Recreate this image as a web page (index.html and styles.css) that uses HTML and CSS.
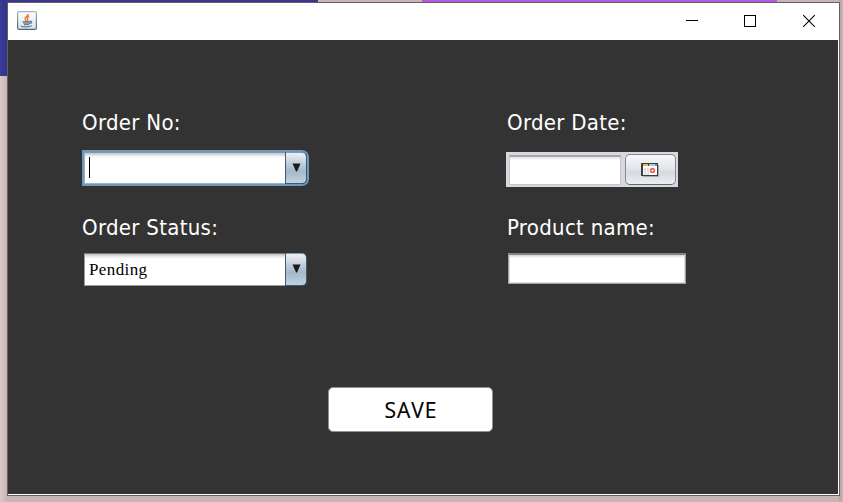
FILE: index.html
```html
<!DOCTYPE html>
<html lang="en">
<head>
<meta charset="utf-8">
<title>Order</title>
<link rel="stylesheet" href="styles.css">
</head>
<body>
<main class="window">
  <header class="titlebar">
    <svg class="app-icon" width="20" height="19" viewBox="0 0 20 19">
      <defs>
        <linearGradient id="tile" x2="0" y2="1"><stop offset="0" stop-color="#fff"/><stop offset="1" stop-color="#dce1e5"/></linearGradient>
        <linearGradient id="rim" x2="0" y2="1"><stop offset="0" stop-color="#a3b5c1"/><stop offset="1" stop-color="#4d6676"/></linearGradient>
      </defs>
      <rect x=".6" y=".6" width="18.8" height="17.8" rx="1.5" fill="url(#tile)" stroke="url(#rim)" stroke-width="1.2"/>
      <path d="M11.300 3c.3 2-3.800 2.800-3.200 4.700.2.900 1 1.300 1 2.300M12.200 5.300c-2 .9-2.500 1.800-1.600 2.700.5.600.2 1.200-.3 1.800" fill="none" stroke="#e8853c" stroke-width="1.500"/>
      <path d="M5.500 10.700h7.500M6.200 12.200h6.500M7 13.600h5M12.500 10.500c3-.8 2.800 1.700-.3 2.200M3.800 15c2 1.200 8.500 1.200 11-.2" fill="none" stroke="#5f83a1" stroke-width="1.300"/>
    </svg>
    <svg class="controls" width="133" height="13" viewBox="0 0 133 13" fill="none" stroke="#000">
      <path d="M0 6.500h12"/>
      <rect x="58.500" y="1.500" width="11" height="11"/>
      <path d="M117.200 1.200l11.600 11.600M128.800 1.200l-11.600 11.600" stroke-width="1.100"/>
    </svg>
  </header>
  <section class="content">
    <div class="form">
      <div class="field">
        <label class="label">Order No:</label>
        <div class="combo focused">
          <div class="combo-text"><span class="caret"></span></div>
          <div class="combo-arrow"><svg width="9" height="9"><path d="M.5.5h8L5 8.500H4z" fill="#1b1b1b"/></svg></div>
        </div>
      </div>
      <div class="field">
        <label class="label right">Order Date:</label>
        <div class="date-picker">
          <div class="date-text"></div>
          <div class="date-button">
            <svg width="18" height="14" viewBox="0 0 18 14" shape-rendering="crispEdges">
              <path d="M2 2h16v12H2z" fill="#aaa"/>
              <path d="M0 0h17v13H0z" fill="#3c3c3c"/>
              <path d="M2 3h14v9H2z" fill="#fff"/>
              <path d="M2 1h5v2H2z" fill="#f5b43c"/>
              <path d="M8 1h6v2H8z" fill="#a9c8ee"/>
              <path d="M14 1h2v2h-2z" fill="#7890b0"/>
              <path d="M3 5h2v7H3zM6 5h2v7H6z" fill="#dedede"/>
              <circle cx="11.500" cy="7.500" r="1.900" fill="none" stroke="#ec5f5f" stroke-width="1.600" shape-rendering="auto"/>
            </svg>
          </div>
        </div>
      </div>
      <div class="field">
        <label class="label">Order Status:</label>
        <div class="combo">
          <div class="combo-text">Pending</div>
          <div class="combo-arrow"><svg width="9" height="9"><path d="M.5.5h8L5 8.500H4z" fill="#1b1b1b"/></svg></div>
        </div>
      </div>
      <div class="field">
        <label class="label right">Product name:</label>
        <div class="text-field"></div>
      </div>
    </div>
    <button class="save">SAVE</button>
  </section>
</main>
</body>
</html>
```

FILE: styles.css
```css
* { box-sizing: border-box; }
body {
  margin: 0;
  width: 843px;
  height: 502px;
  overflow: hidden;
  padding: 2px 3px 6px 7px;
  background:
    linear-gradient(#b45ae0, #b45ae0) 422px 0 / 355px 2px no-repeat,
    linear-gradient(#37378f, #37378f) 0 0 / 318px 2px no-repeat,
    linear-gradient(90deg, #3c3c9b, #32328a) 0 0 / 7px 76px no-repeat,
    linear-gradient(90deg, #dcc9ca, #c9b5b6 7px, #c9b5b6 838px, #b9a5a7 840px, #cab8b9);
}
.window {
  height: 494px;
  border: 1px solid #685d60;
  background: #fff;
}
.titlebar {
  height: 37px;
  display: flex;
  justify-content: space-between;
  padding: 8px 20px 0 9px;
}
.app-icon { display: block; }
.controls { display: block; margin-top: 3px; }
.content {
  height: 454px;
  margin-right: 1px;
  padding: 66px 0 0 74px;
  background: #333;
}
.form {
  display: grid;
  grid-template-columns: 424px 250px;
  grid-template-rows: 105px 105px;
}
.field { display: flex; flex-direction: column; align-items: flex-start; }
.label {
  height: 34px;
  line-height: 34px;
  color: #fff;
  font-family: "DejaVu Sans Condensed", "DejaVu Sans", sans-serif;
  font-stretch: condensed;
  font-size: 22px;
  letter-spacing: .3px;
  white-space: nowrap;
}
.right { margin-left: 1px; }
.combo {
  display: flex;
  width: 223px;
  height: 33px;
  margin: 8px 0 0 2px;
}
.combo-text {
  width: 201px;
  padding-left: 4px;
  border: 1px solid #9a9a9a;
  border-top-color: #777;
  border-right: 0;
  background: linear-gradient(#c4c4c6, #eee 3px, #fff 5px);
  color: #000;
  font: 17px/31px "Liberation Serif", serif;
  letter-spacing: .4px;
}
.combo-arrow {
  width: 22px;
  display: flex;
  justify-content: center;
  padding: 10px 0 0 1px;
  border: 1px solid #3f596e;
  border-top-color: #8497a8;
  border-radius: 0 5px 5px 0;
  background: linear-gradient(#edf1f5, #c1cedb 35%, #a4b8cc 60%, #c0d2e2);
}
.focused {
  height: 32px;
  margin-top: 12px;
  border-radius: 0 5px 5px 0;
  box-shadow: 0 0 0 2px #6c98bf;
}
.focused .combo-text { border-color: #9fb2c4; border-top-color: #8796a4; }
.caret { display: block; width: 1px; height: 21px; margin-top: 4px; background: #000; }
.date-picker {
  display: flex;
  width: 172px;
  height: 35px;
  margin-top: 12px;
  padding: 2px 2px 2px 3px;
  background: #d6d9df;
}
.date-text {
  width: 112px;
  height: 30px;
  margin: 1px 4px 0 0;
  border: 1px solid #c3c5c9;
  border-top: 2px solid #a4a6aa;
  background: linear-gradient(#e2e2e4, #fff 3px);
}
.date-button {
  width: 51px;
  height: 31px;
  padding: 8px 0 0 15px;
  border: 1px solid #85898f;
  border-bottom-color: #63676e;
  border-radius: 5px;
  background: linear-gradient(#f8f8fa, #e4e6eb 45%, #d6d9df 60%, #eceef3);
}
.date-button svg { display: block; }
.text-field {
  width: 178px;
  height: 31px;
  margin: 8px 0 0 2px;
  border: 1px solid #a1a1a1;
  border-top: 2px solid #858585;
  background: linear-gradient(#d4d4d4, #fff 3px);
  box-shadow: inset 1px 0 #ddd, inset -1px -1px #ddd;
}
.save {
  display: block;
  width: 165px;
  height: 45px;
  margin: 71px 0 0 246px;
  padding: 0 0 0 1px;
  border: 1px solid #8e9195;
  border-radius: 5px;
  background: #fff;
  color: #000;
  font: 21px "Open Sans", sans-serif;
  letter-spacing: 1px;
  -webkit-text-stroke: .2px #000;
}
```
